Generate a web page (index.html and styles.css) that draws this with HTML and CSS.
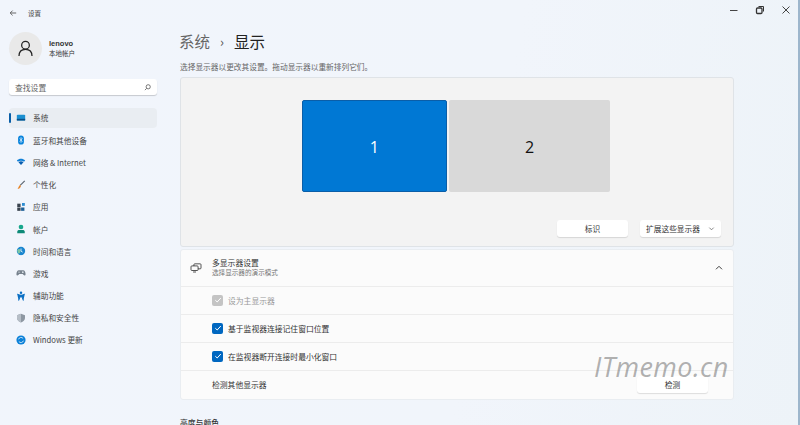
FILE: index.html
```html
<!DOCTYPE html>
<html lang="zh-CN">
<head>
<meta charset="utf-8">
<title>设置</title>
<link rel="stylesheet" href="styles.css">
</head>
<body>
<div class="app">
  <aside class="sidebar">
    <div class="titlebar">
      <svg class="back" width="8" height="8" viewBox="0 0 10 10"><path d="M9 5H1.500M4.500 2 1.500 5l3 3" fill="none" stroke="#555" stroke-width="1.100"/></svg>
      <span>设置</span>
    </div>
    <div class="profile">
      <div class="avatar">
        <svg width="15" height="17" viewBox="0 0 18 20"><circle cx="9" cy="6" r="4.600" fill="none" stroke="#222" stroke-width="1.500"/><path d="M1.200 19c0-5 3-8 7.800-8s7.800 3 7.800 8" fill="none" stroke="#222" stroke-width="1.500"/></svg>
      </div>
      <div class="who">
        <div class="name">lenovo</div>
        <div class="kind">本地帐户</div>
      </div>
    </div>
    <div class="search">
      <span>查找设置</span>
      <svg width="7" height="7" viewBox="0 0 8 8"><circle cx="4.800" cy="3.200" r="2.400" fill="none" stroke="#555" stroke-width=".9"/><path d="M3 5 1 7" stroke="#555" stroke-width=".9"/></svg>
    </div>
    <nav class="nav">
      <div class="item active">
        <svg class="ico" viewBox="0 0 12 10"><rect x="1" y="1" width="10" height="7" rx="1" fill="#1b8fd0"/><rect x="1" y="6" width="10" height="2" fill="#0b4f86"/></svg>
        <span>系统</span>
      </div>
      <div class="item">
        <svg class="ico" viewBox="0 0 12 12"><rect x="2.500" y="0.500" width="7" height="11" rx="3.500" fill="#0a84dc"/><path d="M4.400 4 7.400 7.600 6 9V3L7.400 4.400 4.400 8" fill="none" stroke="#fff" stroke-width=".7"/></svg>
        <span>蓝牙和其他设备</span>
      </div>
      <div class="item">
        <svg class="ico" viewBox="0 0 12 10"><path d="M1 3c3-2.500 7-2.500 10 0L9.700 4.600C7.500 3 4.500 3 2.300 4.600Z" fill="#0f7fd6"/><path d="M3 5.200c1.800-1.300 4.200-1.300 6 0L6 8.600Z" fill="#0a5fb0"/></svg>
        <span>网络 &amp; Internet</span>
      </div>
      <div class="item">
        <svg class="ico" viewBox="0 0 12 12"><path d="M10.500 1 5 6.500" stroke="#5a6470" stroke-width="1.400"/><path d="M5 6 6 7.200C5.400 9.600 3.600 10.600 1.800 10.600 3 9.600 3 7 5 6Z" fill="#e8872c"/></svg>
        <span>个性化</span>
      </div>
      <div class="item">
        <svg class="ico" viewBox="0 0 12 12"><rect x="1.500" y="2" width="4" height="4" fill="#39424e"/><rect x="1.500" y="6.600" width="4" height="4" fill="#39424e"/><rect x="6.100" y="6.600" width="4" height="4" fill="#1d5f96"/><rect x="7.200" y="1.200" width="3.400" height="3.400" fill="#2d8bd0"/></svg>
        <span>应用</span>
      </div>
      <div class="item">
        <svg class="ico" viewBox="0 0 12 12"><circle cx="6" cy="3.600" r="2.800" fill="#18a68c"/><path d="M1.500 11V9.400C1.500 8 2.600 7.200 4 7.200h4c1.400 0 2.500.8 2.500 2.200V11Z" fill="#0d8a78"/></svg>
        <span>帐户</span>
      </div>
      <div class="item">
        <svg class="ico" viewBox="0 0 12 12"><circle cx="6" cy="6" r="5" fill="#1a86cf"/><path d="M1.400 5C3 3 5 3.400 5.400 5.600 5.600 8 3.600 9.400 2.400 9Z" fill="#7cc6a4"/><path d="M6 3V6.200L8 7.400" fill="none" stroke="#fff" stroke-width=".9"/></svg>
        <span>时间和语言</span>
      </div>
      <div class="item">
        <svg class="ico" viewBox="0 0 12 10"><path d="M3.400 1.600h5.200C10.400 1.600 11.500 4 11.500 6.400c0 1.600-1.400 2-2.300 1L8 6.200H4L2.800 7.400c-.9 1-2.300.6-2.300-1C.5 4 1.600 1.600 3.400 1.600Z" fill="#77828e"/><circle cx="8.200" cy="4" r="1" fill="#dfe6ec"/><path d="M2.500 4h2.400" stroke="#dfe6ec" stroke-width=".8"/></svg>
        <span>游戏</span>
      </div>
      <div class="item">
        <svg class="ico" viewBox="0 0 12 12"><circle cx="6" cy="2" r="1.500" fill="#0a6fc4"/><path d="M1.500 3.800 4.800 5V7L3.200 11.500M10.500 3.800 7.200 5V7L8.800 11.500M4.800 5H7.200V7H4.800Z" fill="#0a6fc4" stroke="#0a6fc4" stroke-width="1.200"/></svg>
        <span>辅助功能</span>
      </div>
      <div class="item">
        <svg class="ico" viewBox="0 0 12 12"><path d="M6 .8 10.800 2.600V6C10.800 8.800 8.600 10.400 6 11.400 3.400 10.400 1.200 8.800 1.200 6V2.600Z" fill="#8d97a2"/><path d="M6 .8V11.400C3.400 10.400 1.200 8.800 1.200 6V2.600Z" fill="#b6bec7"/></svg>
        <span>隐私和安全性</span>
      </div>
      <div class="item">
        <svg class="ico" viewBox="0 0 12 12"><circle cx="6" cy="6" r="5.500" fill="#0a80d8"/><path d="M3 5.200A3.200 3.200 0 0 1 8.600 4.200M9 6.800A3.200 3.200 0 0 1 3.400 7.800" fill="none" stroke="#fff" stroke-width=".9"/></svg>
        <span>Windows 更新</span>
      </div>
    </nav>
  </aside>

  <main class="main">
    <div class="wincontrols">
      <svg width="10" height="10" viewBox="0 0 10 10"><path d="M1 5.500H8.500" stroke="#444" stroke-width="1"/></svg>
      <svg width="10" height="10" viewBox="0 0 10 10"><rect x="1.500" y="3" width="5.500" height="5.500" rx="1" fill="none" stroke="#333" stroke-width="1.300"/><path d="M3.500 1.500H8.500V6.500" fill="none" stroke="#333" stroke-width="1"/></svg>
      <svg width="10" height="10" viewBox="0 0 10 10"><path d="M1.500 1.500 8.500 8.500M8.500 1.500 1.500 8.500" stroke="#444" stroke-width="1"/></svg>
    </div>
    <h1 class="crumb"><span class="parent">系统</span><span class="sep">›</span><span>显示</span></h1>
    <p class="desc">选择显示器以更改其设置。拖动显示器以重新排列它们。</p>

    <section class="arrange">
      <div class="monitors">
        <div class="mon mon-one">1</div>
        <div class="mon mon-two">2</div>
      </div>
      <div class="arrange-actions">
        <button class="btn btn-id">标识</button>
        <button class="btn btn-extend"><span>扩展这些显示器</span>
          <svg width="7" height="7" viewBox="0 0 8 8"><path d="M1.500 3 4 5.500 6.500 3" fill="none" stroke="#666" stroke-width=".9"/></svg>
        </button>
      </div>
    </section>

    <section class="card">
      <div class="row row-head">
        <svg class="row-ico" width="12" height="10" viewBox="0 0 14 12"><rect x="4.500" y="1" width="8.500" height="6" rx="1" fill="none" stroke="#333" stroke-width="1"/><rect x="1" y="3.500" width="8.500" height="5.500" rx="1" fill="#fbfbfb" stroke="#333" stroke-width="1"/><path d="M3.500 10.800H7" stroke="#333" stroke-width="1"/></svg>
        <div class="head-text">
          <div class="head-title">多显示器设置</div>
          <div class="head-sub">选择显示器的演示模式</div>
        </div>
        <svg class="caret" width="8" height="6" viewBox="0 0 9 7"><path d="M1 5 4.500 1.500 8 5" fill="none" stroke="#333" stroke-width="1.100"/></svg>
      </div>
      <div class="row row-check disabled">
        <span class="check check-off"><svg width="8" height="8" viewBox="0 0 8 8"><path d="M1.300 4.200 3.200 6 6.800 2" fill="none" stroke="#fff" stroke-width="1"/></svg></span>
        <span>设为主显示器</span>
      </div>
      <div class="row row-check">
        <span class="check"><svg width="8" height="8" viewBox="0 0 8 8"><path d="M1.300 4.200 3.200 6 6.800 2" fill="none" stroke="#fff" stroke-width="1"/></svg></span>
        <span>基于监视器连接记住窗口位置</span>
      </div>
      <div class="row row-check">
        <span class="check"><svg width="8" height="8" viewBox="0 0 8 8"><path d="M1.300 4.200 3.200 6 6.800 2" fill="none" stroke="#fff" stroke-width="1"/></svg></span>
        <span>在监视器断开连接时最小化窗口</span>
      </div>
      <div class="row row-detect">
        <span>检测其他显示器</span>
        <button class="btn btn-detect">检测</button>
      </div>
    </section>

    <h2 class="next">亮度与颜色</h2>
  </main>
  <div class="edge"></div>
</div>
<div class="watermark">ITmemo.cn</div>
</body>
</html>
```
FILE: styles.css
```css
* { box-sizing: border-box; }
html, body { margin: 0; height: 100%; overflow: hidden; }
body {
  font-family: "Noto Sans CJK SC", "Noto Sans", sans-serif;
  font-size: 7.8px;
  color: #333;
  background: linear-gradient(100deg, #f1f5fc 0%, #f1f5fb 60%, #edf3f8 100%);
}
.app { display: flex; width: 800px; height: 425px; overflow: hidden; }

.sidebar { width: 180px; flex: none; padding: 0 23px 0 9px; }
.titlebar { display: flex; align-items: center; height: 26px; gap: 11px; color: #444; font-size: 6.500px; }
.profile { display: flex; align-items: center; gap: 7px; margin-top: 6px; height: 33px; }
.avatar {
  width: 33px; height: 33px; border-radius: 50%; background: #e9e9e9;
  display: flex; align-items: center; justify-content: center;
}
.name { font-family: "Liberation Sans", sans-serif; font-size: 7.500px; font-weight: 700; color: #333; line-height: 10px; }
.kind { line-height: 9px; color: #333; font-size: 6.500px; }
.search {
  display: flex; align-items: center; justify-content: space-between;
  height: 16px; margin-top: 14px; padding: 0 6px;
  background: #fff; border-radius: 3px; box-shadow: 0 1px 1px rgba(0,0,0,.18);
  color: #666; font-size: 7.800px;
}
.nav { margin-top: 12px; display: flex; flex-direction: column; font-size: 7.700px; }
.item {
  display: flex; align-items: center; height: 22.200px; padding-left: 7px; gap: 7px;
  color: #444; border-radius: 4px; position: relative;
}
.item.active { background: #e9edf2; height: 20px; margin-bottom: 1.400px; margin-top: .800px; }
.item.active::before {
  content: ""; position: absolute; left: 0; top: 5px; width: 1.500px; height: 10px;
  background: #0a5fa8; border-radius: 1px;
}
.ico { flex: none; width: 10px; height: 10px; }

.main { width: 618px; flex: none; position: relative; }
.wincontrols { position: absolute; top: 5px; right: 7px; display: flex; gap: 16px; }
.crumb {
  display: flex; align-items: center; margin: 0 0 0 -1px; padding-top: 28px; height: 55px;
  font-size: 15.500px; font-weight: 400; color: #222; line-height: 25px;
}
.parent { color: #666; }
.sep { margin: 0 10px 0 10px; font-size: 13px; color: #555; width: 4px; }
.desc { margin: 7px 0 0; height: 15px; line-height: 10px; color: #666; font-size: 7.700px; }

.arrange {
  width: 554px; height: 170px; background: #f3f3f3; border: 1px solid #dfe3e7;
  border-radius: 3px; padding-top: 22px;
}
.monitors { display: flex; gap: 2px; padding-left: 120.500px; }
.mon {
  height: 92px; display: flex; align-items: center; justify-content: center; padding-top: 2px;
  font-family: "Open Sans", sans-serif; font-size: 16px; border-radius: 2px;
}
.mon-one { width: 145.500px; background: #0078d4; color: #fff; border: 1px solid #0a5ea8; }
.mon-two { width: 161px; background: #d9d9d9; color: #111; }
.arrange-actions { display: flex; justify-content: flex-end; gap: 12px; padding: 28px 12px 0 0; }
.btn {
  font: inherit; font-size: 7.700px; height: 17px; border: 0; background: #fff; color: #333; border-radius: 3px;
  box-shadow: 0 1px 1px rgba(0,0,0,.12); display: flex; align-items: center; justify-content: center; padding: 0;
}
.btn-id { width: 71px; }
.btn-extend { width: 81px; gap: 8px; }

.card {
  width: 554px; margin-top: 2px; height: 151px; background: #fbfbfb; border-radius: 3px;
  border: 1px solid #e9edf1; display: flex; flex-direction: column;
}
.row { display: flex; align-items: center; border-bottom: 1px solid #ececec; padding-left: 31px; height: 28.300px; }
.row:last-child { border-bottom: 0; }
.row-head { height: 37px; padding-left: 9px; padding-right: 10px; gap: 10px; }
.row-ico { flex: none; }
.head-text { flex: 1; }
.head-title { line-height: 10px; color: #333; }
.head-sub { line-height: 9px; font-size: 6.600px; color: #777; }
.row-check { gap: 5px; color: #333; }
.row-check.disabled { color: #999; }
.check {
  width: 11px; height: 11px; border-radius: 2px; background: #0067c0;
  display: flex; align-items: center; justify-content: center;
}
.check-off { background: #c4c4c4; }
.row-detect { justify-content: space-between; padding-right: 25px; }
.btn-detect { width: 71px; }
.next { margin: 18px 0 0; font-size: 7.800px; font-weight: 500; color: #333; line-height: 10px; }

.edge { width: 2px; flex: none; background: #9db6cc; }
.watermark {
  position: absolute; left: 594px; top: 350px;
  font-family: "Open Sans", sans-serif; font-style: italic; font-size: 27px; line-height: 34px;
  color: rgba(110,110,110,.55); letter-spacing: .4px;
}
```
